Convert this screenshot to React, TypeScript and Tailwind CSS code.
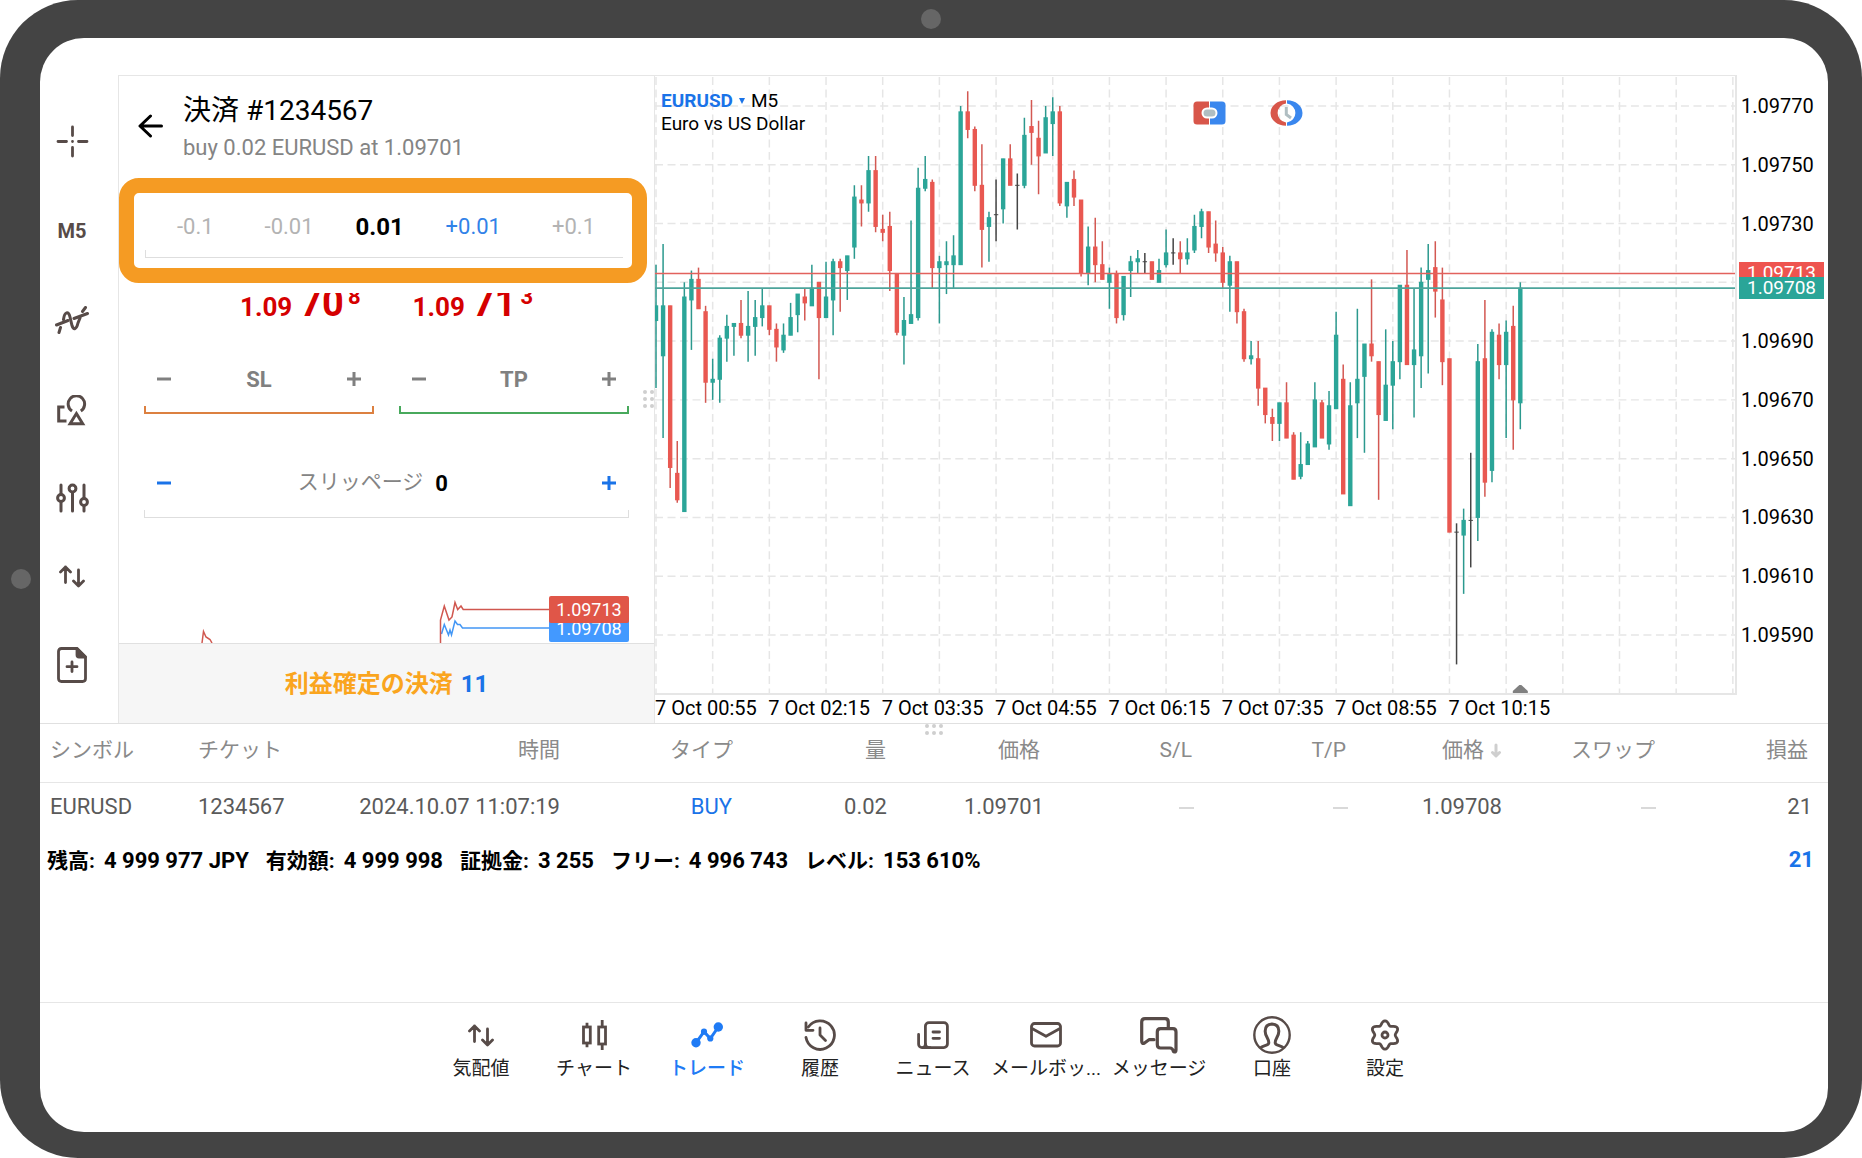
import { useState } from 'react';
import type { ReactNode } from 'react';
import clsx from 'clsx';

// [open, high, low, close] in points above 1.09000
const CANDLES = [
  [697, 716, 674, 702], [685, 723, 657, 702], [702, 702, 640, 647], [645, 656, 635, 636],
  [632, 710, 632, 705], [704, 714, 687, 711], [711, 715, 701, 701], [700, 702, 669, 676],
  [676, 684, 670, 677], [677, 692, 669, 691], [691, 699, 683, 695], [695, 696, 685, 696],
  [696, 704, 691, 692], [692, 707, 683, 695], [695, 704, 685, 698], [698, 708, 695, 702],
  [702, 702, 692, 694], [694, 696, 683, 688], [687, 696, 686, 692], [692, 703, 692, 698],
  [699, 706, 693, 706], [705, 708, 697, 703], [702, 716, 702, 708], [710, 710, 677, 698],
  [698, 717, 698, 705], [704, 718, 692, 717], [717, 718, 700, 715], [714, 719, 704, 719],
  [722, 743, 718, 739], [738, 743, 729, 737], [737, 753, 734, 748], [748, 753, 727, 729],
  [728, 733, 724, 727], [729, 734, 707, 714], [713, 713, 692, 693], [692, 705, 682, 697],
  [696, 731, 696, 699], [698, 749, 697, 742], [742, 753, 741, 745], [744, 745, 708, 715],
  [715, 719, 696, 717], [716, 724, 706, 717], [716, 726, 708, 719], [716, 770, 716, 768],
  [768, 775, 759, 762], [762, 763, 741, 743], [743, 757, 715, 728], [729, 734, 717, 732],
  [733, 745, 724, 733], [735, 752, 730, 752], [752, 757, 743, 743], [743, 747, 728, 743],
  [743, 766, 742, 760], [763, 772, 750, 761], [759, 765, 740, 753], [754, 770, 754, 766],
  [764, 773, 753, 768], [768, 770, 736, 737], [736, 744, 732, 744], [745, 748, 736, 739],
  [738, 738, 712, 713], [713, 729, 709, 722], [722, 732, 710, 716], [716, 724, 711, 711],
  [710, 715, 701, 713], [713, 714, 696, 698], [699, 712, 697, 712], [714, 719, 705, 717],
  [717, 721, 713, 718], [717, 720, 713, 717], [717, 717, 711, 711], [710, 718, 710, 714],
  [716, 728, 715, 720], [720, 725, 716, 720], [720, 724, 713, 718], [718, 725, 716, 720],
  [721, 733, 720, 729], [729, 735, 725, 734], [734, 734, 720, 722], [723, 731, 717, 720],
  [720, 722, 708, 710], [709, 719, 700, 717], [717, 717, 696, 700], [700, 701, 683, 684],
  [684, 690, 682, 685], [684, 690, 668, 674], [674, 674, 662, 665], [664, 667, 656, 662],
  [662, 669, 656, 669], [669, 676, 657, 657], [658, 659, 643, 643], [644, 659, 643, 648],
  [648, 656, 648, 655], [654, 676, 654, 670], [669, 670, 657, 657], [655, 673, 653, 668],
  [667, 700, 667, 692], [677, 682, 638, 638], [634, 676, 634, 668], [669, 701, 657, 677],
  [678, 689, 652, 689], [689, 711, 683, 685], [683, 683, 636, 665], [663, 694, 663, 675],
  [675, 690, 660, 683], [683, 709, 677, 709], [709, 721, 682, 682], [682, 708, 664, 687],
  [685, 715, 674, 710], [711, 723, 679, 714], [715, 724, 698, 707], [704, 715, 675, 683],
  [684, 684, 625, 625], [625, 628, 580, 625], [624, 633, 604, 629], [629, 652, 613, 629],
  [630, 689, 622, 683], [684, 704, 637, 642], [646, 694, 642, 693], [692, 696, 677, 682],
  [682, 697, 657, 693], [695, 702, 653, 670], [669, 710, 660, 708],
];

const CHART_W = 1079;
const CHART_H = 618;
const STEP = 7.078;
const POINT = 2.944;
const candleX = (i: number) => 1 + i * STEP;
const priceY = (p: number) => 30 + (770 - p) * POINT;

const TIMES = ['00:55', '02:15', '03:35', '04:55', '06:15', '07:35', '08:55', '10:15'];
const PRICES = ['1.09770', '1.09750', '1.09730', '', '1.09690', '1.09670', '1.09650', '1.09630', '1.09610', '1.09590'];

const UP_DOWN = (
  <svg width="26" height="23" viewBox="0 0 26 23" fill="none" stroke="currentColor" strokeWidth="2.8" strokeLinecap="round" strokeLinejoin="round">
    <path d="M6.5 17.5V2M1.5 7l5-5 5 5M19.5 5v16M14.5 16l5 5 5-5" />
  </svg>
);

// six soft teeth, one pointing straight up
const GEAR = Array.from({ length: 72 }, (_, i) => {
  const a = (i / 72) * Math.PI * 2;
  const r = 12.2 + 2 * Math.cos(6 * a);
  return `${(16 + r * Math.sin(a)).toFixed(2)},${(16 - r * Math.cos(a)).toFixed(2)}`;
}).join(' ');

const NAV: { label: string; icon: ReactNode }[] = [
  { label: '気配値', icon: UP_DOWN },
  {
    label: 'チャート',
    icon: (
      <svg width="25" height="30" viewBox="0 0 25 30" fill="none" stroke="currentColor" strokeWidth="2.8">
        <rect x="1.5" y="7" width="6.8" height="16" />
        <rect x="16.7" y="7" width="6.8" height="17" />
        <path d="M5 2.7V7M5 23v4.3M20.2 0v7M20.2 24v6" />
      </svg>
    ),
  },
  {
    label: 'トレード',
    icon: (
      <svg width="32" height="26" viewBox="0 0 32 26" fill="currentColor">
        <path d="M5 20.8L13 9.7l6.3 6.8L27.3 5" fill="none" stroke="currentColor" strokeWidth="3" />
        <circle cx="5" cy="20.8" r="4.7" />
        <circle cx="13" cy="9.7" r="3.1" />
        <circle cx="19.3" cy="16.5" r="3.1" />
        <circle cx="27.3" cy="5" r="4.7" />
      </svg>
    ),
  },
  {
    label: '履歴',
    icon: (
      <svg width="33" height="32" viewBox="0 0 33 32" fill="none" stroke="currentColor" strokeWidth="2.8" strokeLinecap="round" strokeLinejoin="round">
        <path d="M2 18.5A14.3 14.3 0 1 0 4.3 8" />
        <path d="M2 4v7.3h7M16 9v7l5.5 5.5" />
      </svg>
    ),
  },
  {
    label: 'ニュース',
    icon: (
      <svg width="32" height="29" viewBox="0 0 32 29" fill="none" stroke="currentColor" strokeWidth="2.8" strokeLinecap="round">
        <rect x="8.4" y="1.6" width="22" height="25" rx="3.5" />
        <path d="M1.6 13.5V23.2a3.4 3.4 0 0 0 6.8 0M6 26.6h7" />
        <path d="M16 11h6.5M16 17.3h6.5" />
      </svg>
    ),
  },
  {
    label: 'メールボッ...',
    icon: (
      <svg width="32" height="26" viewBox="0 0 32 26" fill="none" stroke="currentColor" strokeWidth="2.8" strokeLinejoin="round">
        <rect x="1.5" y="1.5" width="29" height="22.5" rx="3" />
        <path d="M2 6.5l14 7.8 14-7.8" />
      </svg>
    ),
  },
  {
    label: 'メッセージ',
    icon: (
      <svg width="38" height="37" viewBox="0 0 38 37" fill="none" stroke="currentColor" strokeWidth="3.2" strokeLinejoin="round" strokeLinecap="round">
        <path d="M14 22.7H9L4.5 26Q1.7 27.5 1.7 24V5Q1.7 1.7 5 1.7H25Q28.3 1.7 28.3 5V10" />
        <path d="M20.5 11.7H33Q36 11.7 36 15V33Q36 35.8 33.5 34.5Q32.5 31 30 31H20.5Q17.3 31 17.3 27.5V15Q17.3 11.7 20.5 11.7Z" />
      </svg>
    ),
  },
  {
    label: '口座',
    icon: (
      <svg width="38" height="38" viewBox="0 0 38 38" fill="none" stroke="currentColor" strokeWidth="2.4">
        <circle cx="19" cy="19" r="17.7" />
        <path strokeWidth="3" strokeLinejoin="round" d="M7.5 31.8C10 29.2 15.6 29.8 15.8 26.8C15.9 22.5 12.2 20.5 12.2 15.5C12 10.5 14 8.3 19 8C24 8.3 26 10.5 25.8 15.5C25.8 20.5 22.1 22.5 22.2 26.8C22.4 29.8 28 29.2 30.5 31.8" />
      </svg>
    ),
  },
  {
    label: '設定',
    icon: (
      <svg width="32" height="32" viewBox="0 0 32 32" fill="none" stroke="currentColor" strokeWidth="2.8" strokeLinejoin="round">
        <polygon points={GEAR} />
        <circle cx="16" cy="16" r="3" />
      </svg>
    ),
  },
];

const SUMMARY = [
  ['残高:', '4 999 977 JPY'],
  ['有効額:', '4 999 998'],
  ['証拠金:', '3 255'],
  ['フリー:', '4 996 743'],
  ['レベル:', '153 610%'],
];

function ToolButton({ label, className, children }: { label: string; className: string; children: ReactNode }) {
  return (
    <button aria-label={label} className={clsx('flex w-full items-center justify-center text-[#574b48]', className)}>
      {children}
    </button>
  );
}

function Toolbar() {
  return (
    <aside className="flex w-[78px] shrink-0 flex-col pt-[22px] pr-[14px]">
      <ToolButton label="十字線" className="h-[89px]">
        <svg width="33" height="33" viewBox="0 0 33 33" fill="none" stroke="currentColor" strokeWidth="2.8" strokeLinecap="round">
          <path d="M16.5 2v8.5M16.5 22.5V31M2 16.5h8.5M22.5 16.5H31M16.5 16.4v.2" />
        </svg>
      </ToolButton>
      <ToolButton label="時間足" className="h-[89px] text-[20px] font-bold">M5</ToolButton>
      <ToolButton label="インディケータ" className="h-[90px]">
        <svg width="34" height="28" viewBox="0 0 34 28" fill="none" stroke="currentColor" strokeWidth="3" strokeLinecap="round">
          <path d="M4 26.5l1.5-5M8.5 13.5C9.5 5.5 13.5 4.500 15 11l2 8.5c1.5 5 4.5 4 6-2.5L25 12M27.5 5.5l3-4" />
          <path d="M1.5 19L13 14.5M19 12.5L32.5 7.5" />
        </svg>
      </ToolButton>
      <ToolButton label="オブジェクト" className="h-[90px]">
        <svg width="30" height="31" viewBox="0 0 30 31" fill="none" stroke="currentColor" strokeWidth="3">
          <path d="M7.5 12H1.7v14H9.5" />
          <path d="M15 15.9A8.2 8.2 0 1 1 23.8 15.9" />
          <path d="M19.4 18.5l6.3 10.2H13.1z" />
        </svg>
      </ToolButton>
      <ToolButton label="設定" className="h-[86px]">
        <svg width="33" height="30" viewBox="0 0 33 30" fill="none" stroke="currentColor" strokeWidth="3" strokeLinecap="round">
          <path d="M5 2v9M5 19v9M16.5 10v18M28 2v13M28 23v5" />
          <circle cx="5" cy="15" r="3.4" />
          <circle cx="16.5" cy="5.5" r="3.4" />
          <circle cx="28" cy="19" r="3.4" />
        </svg>
      </ToolButton>
      <ToolButton label="取引" className="h-[70px]">{UP_DOWN}</ToolButton>
      <ToolButton label="新規注文" className="h-[108px]">
        <svg width="30" height="36" viewBox="0 0 30 36" fill="none" stroke="currentColor" strokeWidth="2.8" strokeLinejoin="round" strokeLinecap="round">
          <path d="M4.5 1.5H20L28.5 10V31.5Q28.5 34.5 25.5 34.5H4.5Q1.5 34.5 1.5 31.5V4.5Q1.5 1.5 4.5 1.5Z" />
          <path d="M20 1.5V8Q20 10 22 10H28.5Z" fill="currentColor" />
          <path d="M15 15v9.5M10 19.7h10" />
        </svg>
      </ToolButton>
    </aside>
  );
}

function Stepper({ sign, label }: { sign: 'minus' | 'plus'; label: string }) {
  return (
    <button aria-label={label} className="flex h-[38px] w-8 items-center justify-center">
      <svg width="14" height="14" viewBox="0 0 14 14" stroke="currentColor" strokeWidth="3">
        <path d={sign === 'plus' ? 'M0 7h14M7 0v14' : 'M0 7h14'} />
      </svg>
    </button>
  );
}

function LevelField({ name, line }: { name: string; line: string }) {
  return (
    <div className="min-w-0 flex-1">
      <div className="mb-2 flex justify-between px-1 text-[#808080]">
        <Stepper sign="minus" label={`${name} -`} />
        <input aria-label={name} placeholder={name} className="w-24 text-center text-[22px] font-bold outline-none placeholder:text-[#808080]" />
        <Stepper sign="plus" label={`${name} +`} />
      </div>
      <div className={clsx('h-2 border-x-2 border-b-2', line)} />
    </div>
  );
}

function Quote({ big, pip }: { big: string; pip: string }) {
  return (
    <div className="text-[26px] leading-none font-bold whitespace-nowrap text-[#d50000]">
      1.09<span className="ml-2 text-[38px]">{big}</span>
      <sup className="-top-3 ml-1 text-[22px]">{pip}</sup>
    </div>
  );
}

function ClosePanel() {
  const [volume, setVolume] = useState('0.01');
  const [slippage, setSlippage] = useState('0');

  return (
    <section className="relative flex w-[537px] shrink-0 flex-col border-x border-[#e6e6e6]">
      <header className="flex h-[102px] items-start gap-5 pt-4 pl-[19px]">
        <button aria-label="戻る" className="mt-[22px]">
          <svg width="25" height="24" viewBox="0 0 25 24" fill="none" stroke="#000" strokeWidth="3" strokeLinecap="round" strokeLinejoin="round">
            <path d="M12.5 2L2 12l10.5 10M2.5 12H23.5" />
          </svg>
        </button>
        <div>
          <h1 className="text-[28px] leading-[38px] text-black">決済 #1234567</h1>
          <p className="text-[22px] leading-9 text-[#848484]">buy 0.02 EURUSD at 1.09701</p>
        </div>
      </header>

      <div className="mr-[7px] rounded-[20px] border-[15px] border-[#f59b23] bg-white pr-[9px] pb-[10px] pl-[11px]">
        <div className="flex h-[57px] items-center justify-between pt-[10px] pr-7 pl-8 text-[22px] text-[#b3b3b3]">
          <button>-0.1</button>
          <div className="flex items-center gap-10">
            <button>-0.01</button>
            <input
              aria-label="量"
              value={volume}
              onChange={(e) => setVolume(e.target.value)}
              className="w-[52px] text-center text-[24px] font-bold text-black outline-none"
            />
            <button className="text-[#3182e8]">+0.01</button>
          </div>
          <button>+0.1</button>
        </div>
        <div className="h-2 border-b border-l border-[#dedede]" />
      </div>

      <div className="mt-[10px] flex h-[37px] justify-center gap-[52px] overflow-hidden">
        <div className="-mt-[9px]"><Quote big="70" pip="8" /></div>
        <div className="-mt-[9px]"><Quote big="71" pip="3" /></div>
      </div>

      <div className="mt-[30px] flex gap-[25px] px-[25px]">
        <LevelField name="SL" line="border-[#dc8040]" />
        <LevelField name="TP" line="border-[#48a95c]" />
      </div>

      <div className="mt-[50px] px-[25px]">
        <div className="mb-2 flex items-center justify-between px-1 text-[#1a73e8]">
          <Stepper sign="minus" label="スリッページ -" />
          <div className="flex items-center gap-3">
            <label htmlFor="slippage" className="text-[21px] text-[#848484]">スリッページ</label>
            <input
              id="slippage"
              value={slippage}
              onChange={(e) => setSlippage(e.target.value)}
              className="w-10 text-[22px] font-bold text-black outline-none"
            />
          </div>
          <Stepper sign="plus" label="スリッページ +" />
        </div>
        <div className="h-2 border-x border-b border-[#dedede]" />
      </div>

      {/* tick chart, mostly scrolled under the footer */}
      <div className="relative flex h-[125px] items-end justify-end pr-[25px]">
        <svg width="430" height="50" viewBox="200 593 430 50" fill="none" strokeWidth="1.5">
          <path stroke="#d0574f" d="M203 643L204.5 631.5L207 637L211 639.5L213 643" />
          <path stroke="#4397f5" d="M442.5 634L445.3 624.5L449.5 635L451 630L452.5 635L456 621L458.5 624.5H461L463.5 628H550" />
          <path stroke="#d0574f" d="M441.5 643V620L445.3 606L450 620L453 617L456 602.5L458.7 609.5L462 606L464.2 609.5H550" />
        </svg>
        <div className="absolute right-[25px] bottom-px flex w-20 flex-col text-center text-[18px] leading-[27px] text-white">
          <span className="z-10 rounded-xs bg-[#e05648]">1.09713</span>
          <span className="-mt-2 rounded-xs bg-[#4399ff]">1.09708</span>
        </div>
      </div>

      <button className="flex h-20 items-center justify-center gap-2 border-t border-[#e0e0e0] bg-[#f6f6f6] text-[24px] font-bold text-[#faa51e]">
        利益確定の決済 <span className="text-[#1a73e8]">11</span>
      </button>

      <div className="absolute top-[314px] right-0 grid grid-cols-2 gap-[3px]">
        {[0, 1, 2, 3, 4, 5].map((n) => <i key={n} className="size-1 rounded-full bg-[#cfcfcf]" />)}
      </div>
    </section>
  );
}

function CandleChart() {
  return (
    <svg viewBox={`0 0 ${CHART_W} ${CHART_H}`} preserveAspectRatio="none" className="absolute inset-0 h-full w-full">
      <g stroke="#e6e6e6" strokeWidth="1.5" strokeDasharray="8 4.5">
        {Array.from({ length: 20 }, (_, i) => (
          <path key={i} d={`M${candleX(i * 8)} 1V${CHART_H}`} />
        ))}
        {PRICES.map((_, i) => (
          <path key={i} d={`M0 ${priceY(770 - i * 20)}H${CHART_W}`} />
        ))}
      </g>
      {CANDLES.map(([open, high, low, close], i) => {
        const x = candleX(i);
        const body = open === close ? '#454545' : close > open ? '#2ba598' : '#e95851';
        const wick = open === close ? '#454545' : close > open ? '#2b998e' : '#d35852';
        const top = priceY(Math.max(open, close));
        const height = Math.abs(open - close) * POINT + 1;
        return (
          <g key={i}>
            <path d={`M${x} ${priceY(high)}V${priceY(low)}`} stroke={wick} strokeWidth="1.5" />
            <rect x={x - 2.2} y={top - 0.5} width="4.4" height={height} fill={body} />
          </g>
        );
      })}
      <path d={`M0 ${priceY(713)}H${CHART_W}`} stroke="#e2625d" strokeWidth="1.4" />
      <path d={`M0 ${priceY(708)}H${CHART_W}`} stroke="#4da49b" strokeWidth="1.8" />
      <path d={`M${candleX(122) - 7.5} ${CHART_H}v-2l6.5 -6h2l6.5 6v2z`} fill="#808080" />
    </svg>
  );
}

function ChartPanel() {
  return (
    <section className="flex min-w-0 flex-1 flex-col">
      <div className="flex flex-1">
        <div className="relative min-w-0 flex-1 border-t border-r-2 border-b-2 border-[#e6e6e6]">
          <CandleChart />
          <div className="relative flex items-start justify-between">
            <div className="pt-[13px] pl-[6px] text-[19px] leading-[23px] text-black">
              <p className="flex items-center gap-[6px]">
                <button className="font-bold text-[#1a73e8]">EURUSD</button>
                <svg width="6" height="6" viewBox="0 0 6 6" fill="#1a73e8"><path d="M0 0h6L3 6z" /></svg>
                M5
              </p>
              <p>Euro vs US Dollar</p>
            </div>
            <div className="flex items-center gap-11 pt-6 pr-[432px]">
              <button aria-label="ワンクリック取引">
                <svg width="33" height="26" viewBox="0 0 33 26">
                  <path d="M4 1.5H16V24.5H4Q.5 24.5 .5 21V5Q.5 1.5 4 1.5Z" fill="#d8564a" />
                  <path d="M17 1.5H29Q32.5 1.5 32.5 5V21Q32.5 24.5 29 24.5H17Z" fill="#3a87ee" />
                  <rect x="9.500" y="8.5" width="14" height="9" rx="4.5" fill="#b0bec2" stroke="#fff" strokeWidth="2" />
                </svg>
              </button>
              <button aria-label="取引セッション">
                <svg width="33" height="26" viewBox="0 0 33 26">
                  <path d="M16 .2A15.5 12.8 0 0 0 16 25.8V22.5A9.8 9.6 0 0 1 16 3.5Z" fill="#d8564a" />
                  <path d="M17 .2A15.5 12.8 0 0 1 17 25.8V22.5A9.8 9.6 0 0 0 17 3.5Z" fill="#3a87ee" />
                  <path d="M16.3 7v7.5l4.7 3.5" fill="none" stroke="#b0bec2" strokeWidth="3" />
                </svg>
              </button>
            </div>
          </div>
        </div>

        <div className="relative flex w-[91px] shrink-0 flex-col pt-[2px] pb-[31px] pl-1 text-[20px] text-black">
          {PRICES.map((p, i) => (
            <span key={i} className="flex flex-1 items-center">{p}</span>
          ))}
          <span
            className="absolute left-[2px] w-[85px] -translate-y-1/2 bg-[#ee544f] text-center text-[19px] leading-[22px] text-white"
            style={{ top: `${(priceY(713) / CHART_H) * 100}%` }}
          >
            1.09713
          </span>
          <span
            className="absolute left-[2px] w-[85px] -translate-y-1/2 bg-[#2aa598] text-center text-[19px] leading-[22px] text-white"
            style={{ top: `${(priceY(708) / CHART_H) * 100}%` }}
          >
            1.09708
          </span>
        </div>
      </div>

      <div className="mr-[93px] flex h-7 text-[20px] leading-[26px] whitespace-nowrap text-black">
        {TIMES.map((t) => (
          <span key={t} style={{ width: `${((STEP * 16) / CHART_W) * 100}%` }}>7 Oct {t}</span>
        ))}
      </div>
    </section>
  );
}

function Positions() {
  const none = <i className="inline-block h-[2px] w-[15px] bg-[#d9d9d9] align-middle" />;
  return (
    <section className="relative">
      <div className="absolute top-0 left-1/2 grid -translate-x-1/2 grid-cols-3 gap-[3px]">
        {[0, 1, 2, 3, 4, 5].map((n) => <i key={n} className="size-1 rounded-full bg-[#cfcfcf]" />)}
      </div>
      <table className="w-full table-fixed text-right text-[22px] whitespace-nowrap text-[#5a5a5a]">
        <colgroup>
          <col className="w-[158px]" />
          <col className="w-[160px]" />
          <col className="w-[202px]" />
          <col className="w-[173px]" />
          <col className="w-[154px]" />
          <col className="w-[157px]" />
          <col className="w-[150px]" />
          <col className="w-[154px]" />
          <col className="w-[154px]" />
          <col className="w-[154px]" />
          <col className="w-[172px]" />
        </colgroup>
        <thead className="text-[21px] text-[#8a8a8a]">
          <tr className="h-[58px] border-b border-[#e6e6e6]">
            <th className="pb-1 pl-[10px] text-left font-normal">シンボル</th>
            <th className="pb-1 text-left font-normal">チケット</th>
            <th className="pb-1 font-normal">時間</th>
            <th className="pb-1 font-normal">タイプ</th>
            <th className="pr-px pb-1 font-normal">量</th>
            <th className="pr-1 pb-1 font-normal">価格</th>
            <th className="pr-0.5 pb-1 font-normal">S/L</th>
            <th className="pr-0.5 pb-1 font-normal">T/P</th>
            <th className="pb-1 font-normal">
              <button className="inline-flex items-center gap-[6px]">
                価格
                <svg width="12" height="15" viewBox="0 0 12 15" fill="none" stroke="#cfcfcf" strokeWidth="3" strokeLinecap="round" strokeLinejoin="round">
                  <path d="M6 2v10.5M2.5 9.5L6 13l3.5-3.5" />
                </svg>
              </button>
            </th>
            <th className="pr-px pb-1 font-normal">スワップ</th>
            <th className="pr-5 pb-1 font-normal">損益</th>
          </tr>
        </thead>
        <tbody>
          <tr className="h-12">
            <td className="pl-[10px] text-left">EURUSD</td>
            <td className="text-left">1234567</td>
            <td>2024.10.07 11:07:19</td>
            <td className="pr-px text-[#1a73e8]">BUY</td>
            <td>0.02</td>
            <td>1.09701</td>
            <td>{none}</td>
            <td>{none}</td>
            <td>1.09708</td>
            <td>{none}</td>
            <td className="pr-4">21</td>
          </tr>
        </tbody>
      </table>
      <div className="flex h-[62px] items-center justify-between pr-[14px] pl-[7px] font-bold text-black">
        <dl className="flex gap-[17px]">
          {SUMMARY.map(([label, value]) => (
            <div key={label} className="flex items-baseline gap-[9px]">
              <dt className="text-[21px]">{label}</dt>
              <dd className="text-[22px]">{value}</dd>
            </div>
          ))}
        </dl>
        <span className="pb-1 text-[22px] text-[#1a73e8]">21</span>
      </div>
    </section>
  );
}

export default function App() {
  const [tab, setTab] = useState('トレード');

  return (
    <div className="bg-white font-[Roboto,'Noto_Sans_CJK_JP',sans-serif]">
      <div className="relative flex min-h-screen rounded-[78px] bg-[#444444] pt-[38px] pr-[34px] pb-[26px] pl-10">
        <i className="absolute top-[9px] left-1/2 size-5 -translate-x-1/2 rounded-full bg-[#666666]" />
        <i className="absolute top-1/2 left-[11px] size-5 -translate-y-1/2 rounded-full bg-[#666666]" />

        <main className="flex min-w-0 flex-1 flex-col overflow-hidden rounded-[44px] bg-white pt-[37px]">
          <div className="flex border-b border-[#e0e0e0]">
            <Toolbar />
            <div className="flex border-t border-[#e6e6e6]">
              <ClosePanel />
            </div>
            <ChartPanel />
          </div>
          <Positions />
          <nav className="mt-auto flex h-[130px] justify-center border-t border-[#e6e6e6] pt-3 pr-0.5">
            {NAV.map(({ label, icon }) => (
              <button
                key={label}
                onClick={() => setTab(label)}
                className={clsx(
                  'flex w-[113px] flex-col items-center whitespace-nowrap',
                  tab === label ? 'font-medium text-[#1f7bf5]' : 'text-[#574b48]'
                )}
              >
                <span className="flex h-10 items-center">{icon}</span>
                <span className={clsx('text-[19px] leading-7', tab !== label && 'text-[#222222]')}>{label}</span>
              </button>
            ))}
          </nav>
        </main>
      </div>
    </div>
  );
}
